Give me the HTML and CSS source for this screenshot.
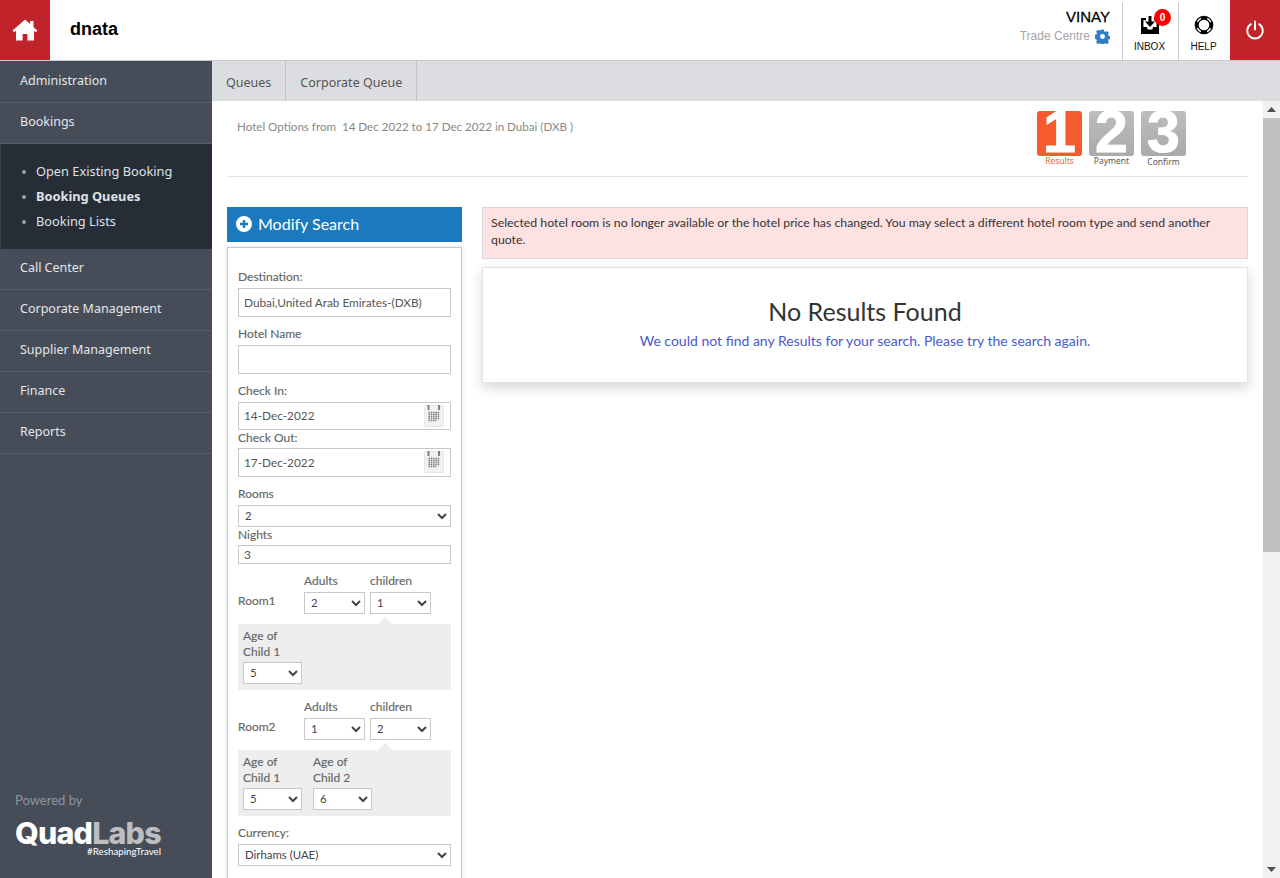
FILE: index.html
```html
<!DOCTYPE html>
<html lang="en">
<head>
<meta charset="utf-8">
<title>dnata</title>
<link rel="stylesheet" href="styles.css">
</head>
<body>
<header class="topbar">
  <a class="home"><svg width="26" height="22" viewBox="0 0 26 22"><path fill="#fff" d="M13 0.5 0.6 11.600l1.600 1.700L4 11.700V21.500h6.600v-6.600h4.800v6.600H22V11.700l1.800 1.600 1.600-1.700L21.500 8.200V2h-3.400v3.100z"/></svg></a>
  <div class="brand">dnata</div>
  <div class="user">
    <div class="user-name">VINAY</div>
    <div class="user-org">Trade Centre
      <svg width="15" height="15" viewBox="0 0 16 16"><path fill="#2f7fc8" fill-rule="evenodd" d="M6.600.5h2.800l.4 2 1.200.6 1.900-.9 2 2-1 1.800.6 1.300 2 .5v2.800l-2 .5-.6 1.200 1 1.900-2 2-1.900-1-1.200.5-.4 2H6.600l-.5-2-1.200-.5-1.800 1-2-2 1-1.900-.6-1.200-2-.5V6.300l2-.5.6-1.300-1-1.800 2-2 1.800.9 1.200-.6zM8 5.400a2.600 2.600 0 1 0 0 5.200 2.600 2.600 0 0 0 0-5.200z"/></svg>
    </div>
  </div>
  <div class="tool">
    <span class="tool-box"><svg width="18" height="18" viewBox="0 0 18 18"><path fill="#000" d="M0 2h5v2.200H2.400v6.800h3.400l1 2.400h4.400l1-2.400h3.400V4.200H13V2h5v16H0z"/><path fill="#000" d="M7.500 0h3v5.500H14l-5 5.500-5-5.500h3.500z"/></svg></span>
    <span class="badge">0</span>
    <span class="tool-label">INBOX</span>
  </div>
  <div class="tool tool-help">
    <span class="tool-box"><svg width="20" height="20" viewBox="0 0 20 20" fill="none"><circle cx="10" cy="10" r="7.300" stroke="#000" stroke-width="4"/><circle cx="10" cy="10" r="7.300" stroke="#fff" stroke-width="1.500" stroke-dasharray="5 6.470" stroke-dashoffset="-3.230"/></svg></span>
    <span class="tool-label">HELP</span>
  </div>
  <a class="power"><svg width="20" height="20" viewBox="0 0 20 20" fill="none" stroke="#fff" stroke-width="2" stroke-linecap="round"><path d="M10 1.500v8"/><path d="M5.800 4.200a7.800 7.800 0 1 0 8.400 0"/></svg></a>
</header>

<div class="shell">
  <nav class="sidebar">
    <a class="nav-item nav-first">Administration</a>
    <a class="nav-item">Bookings</a>
    <ul class="subnav">
      <li>Open Existing Booking</li>
      <li class="current">Booking Queues</li>
      <li>Booking Lists</li>
    </ul>
    <a class="nav-item">Call Center</a>
    <a class="nav-item">Corporate Management</a>
    <a class="nav-item">Supplier Management</a>
    <a class="nav-item">Finance</a>
    <a class="nav-item">Reports</a>
    <div class="powered">
      <div class="powered-by">Powered by</div>
      <div class="logo"><span class="logo-quad">Quad</span><span class="logo-labs">Labs</span></div>
      <div class="logo-tag">#ReshapingTravel</div>
    </div>
  </nav>

  <div class="workspace">
    <div class="tabs">
      <a class="tab">Queues</a>
      <a class="tab">Corporate Queue</a>
    </div>
    <div class="scroller">
      <main class="content">
        <div class="steps-row">
          <div class="trip">Hotel Options from&nbsp; 14 Dec 2022 to 17 Dec 2022 in Dubai (DXB )</div>
          <div class="steps">
            <div class="step active"><span class="step-num">1</span><span class="step-label">Results</span></div>
            <div class="step"><span class="step-num">2</span><span class="step-label">Payment</span></div>
            <div class="step step-low"><span class="step-num">3</span><span class="step-label">Confirm</span></div>
          </div>
        </div>
        <div class="columns">
          <aside class="search">
            <div class="search-head">
              <svg width="16" height="16" viewBox="0 0 16 16"><circle cx="8" cy="8" r="8" fill="#fff"/><path d="M8 4v8M4 8h8" stroke="#1b79bd" stroke-width="2.400"/></svg>
              Modify Search
            </div>
            <form class="search-panel">
              <label class="lbl lbl-first">Destination:</label>
              <input class="field tall" value="Dubai,United Arab Emirates-(DXB)">
              <label class="lbl lbl-gap">Hotel Name</label>
              <input class="field tall">
              <label class="lbl lbl-gap">Check In:</label>
              <div class="date"><input class="field date-input" value="14-Dec-2022"><span class="cal"><svg width="20" height="22" viewBox="0 0 20 22"><rect x=".5" y=".5" width="19" height="21" rx="1" fill="#f2f2f2" stroke="#e6e6e6"/><path d="M4.500 0v5M15 0v5" stroke="#808080" stroke-width="2"/><path d="M4.500 7.500h11.500M4.500 9.500h11.500M4.500 11.500h11.500M4.500 13.500h11.500M4.500 15.500h8" stroke="#7d7d7d" stroke-width="1.300" stroke-dasharray="1.500 .8"/></svg></span></div>
              <label class="lbl lbl-tight">Check Out:</label>
              <div class="date date-b"><input class="field date-input" value="17-Dec-2022"><span class="cal"><svg width="20" height="22" viewBox="0 0 20 22"><rect x=".5" y=".5" width="19" height="21" rx="1" fill="#f2f2f2" stroke="#e6e6e6"/><path d="M4.500 0v5M15 0v5" stroke="#808080" stroke-width="2"/><path d="M4.500 7.500h11.500M4.500 9.500h11.500M4.500 11.500h11.500M4.500 13.500h11.500M4.500 15.500h8" stroke="#7d7d7d" stroke-width="1.300" stroke-dasharray="1.500 .8"/></svg></span></div>
              <label class="lbl lbl-gap">Rooms</label>
              <select class="sel sel-full"><option>2</option></select>
              <label class="lbl lbl-tight">Nights</label>
              <input class="field short" value="3">

              <div class="room">
                <span class="room-name">Room1</span>
                <div class="pax"><span class="pax-lbl">Adults</span><select class="sel sel-pax"><option>2</option></select></div>
                <div class="pax"><span class="pax-lbl">children</span><select class="sel sel-pax"><option>1</option></select></div>
              </div>
              <div class="ages">
                <div class="age"><span class="age-lbl">Age of<br>Child 1</span><select class="sel sel-age"><option>5</option></select></div>
              </div>

              <div class="room">
                <span class="room-name">Room2</span>
                <div class="pax"><span class="pax-lbl">Adults</span><select class="sel sel-pax"><option>1</option></select></div>
                <div class="pax"><span class="pax-lbl">children</span><select class="sel sel-pax"><option>2</option></select></div>
              </div>
              <div class="ages">
                <div class="age"><span class="age-lbl">Age of<br>Child 1</span><select class="sel sel-age"><option>5</option></select></div>
                <div class="age"><span class="age-lbl">Age of<br>Child 2</span><select class="sel sel-age"><option>6</option></select></div>
              </div>

              <label class="lbl lbl-gap">Currency:</label>
              <select class="sel sel-full"><option>Dirhams (UAE)</option></select>
            </form>
          </aside>
          <section class="results">
            <div class="alert">Selected hotel room is no longer available or the hotel price has changed. You may select a different hotel room type and send another quote.</div>
            <div class="empty">
              <h2 class="empty-title">No Results Found</h2>
              <p class="empty-text">We could not find any Results for your search. Please try the search again.</p>
            </div>
          </section>
        </div>
      </main>
      <div class="scrollbar">
        <span class="sb-btn"><svg width="9" height="5" viewBox="0 0 9 5"><path d="M4.500 0 9 5H0z" fill="#505050"/></svg></span>
        <span class="sb-thumb"></span>
        <span class="sb-rest"></span>
        <span class="sb-btn"><svg width="9" height="5" viewBox="0 0 9 5"><path d="M4.500 5 9 0H0z" fill="#505050"/></svg></span>
      </div>
    </div>
  </div>
</div>
</body>
</html>
```
FILE: styles.css
```css
* { box-sizing: border-box; }
html, body { margin: 0; height: 100%; overflow: hidden; }
body { font-family: "Lato", "Liberation Sans", sans-serif; color: #333; background: #fff; display: flex; flex-direction: column; height: 878px; }

.topbar { height: 61px; flex: none; display: flex; border-bottom: 1px solid #c9cacc; background: #fff; }
.home { width: 50px; height: 60px; background: #c1232b; display: flex; align-items: center; justify-content: center; }
.brand { margin-left: 20px; font: bold 18px/58px "Liberation Sans", sans-serif; color: #000; }
.user { margin-left: auto; padding: 8px 12px 0 0; text-align: right; font-family: "Liberation Sans", sans-serif; }
.user-name { font-size: 15px; line-height: 17px; color: #000; -webkit-text-stroke: .3px #000; }
.user-org { font-size: 12px; line-height: 18px; margin-top: 2px; color: #a5a5a5; display: flex; align-items: center; gap: 5px; }
.tool { position: relative; width: 56px; height: 58px; margin-top: 2px; padding-right: 2px; border-left: 1px solid #ccc; display: flex; flex-direction: column; align-items: center; font-family: "Liberation Sans", sans-serif; }
.tool-help { width: 52px; }
.tool-box { margin-top: 13px; height: 20px; display: flex; align-items: center; }
.tool-label { font-size: 10px; line-height: 12px; margin-top: 6px; color: #111; }
.badge { position: absolute; left: 31px; top: 7px; width: 17px; height: 17px; border-radius: 50%; background: #f00; color: #fff; font-size: 10px; line-height: 17px; text-align: center; font-weight: bold; }
.power { width: 50px; height: 60px; background: #c1232b; display: flex; align-items: center; justify-content: center; }

.shell { flex: 1; min-height: 0; display: flex; }
.sidebar { width: 212px; flex: none; background: #464d59; display: flex; flex-direction: column; font-family: "Noto Sans", sans-serif; }
.nav-item { height: 41px; padding-left: 20px; font-size: 12.500px; line-height: 37px; color: #e4e6ea; border-bottom: 1px solid #585e69; }
.nav-first { height: 42px; line-height: 39px; }
.subnav { margin: 0; height: 105px; padding: 15px 0 0 35px; background: #272d37; border-left: 1px solid #3a414c; color: #dfe1e5; font-size: 12.800px; line-height: 25px; list-style: none; }
.subnav li { position: relative; }
.subnav li::before { content: ""; position: absolute; left: -14px; top: 11px; width: 4px; height: 4px; border-radius: 50%; background: #99a0a8; }
.subnav .current { font-weight: bold; }
.powered { margin-top: auto; padding: 0 0 21px 15px; }
.powered-by { font-size: 13px; line-height: 16px; color: #8f959e; font-family: "Lato", sans-serif; }
.logo { margin-top: 8px; font: 800 30.400px/34px "Inter", sans-serif; letter-spacing: -.8px; white-space: nowrap; }
.logo-quad { color: #fff; }
.logo-labs { color: #bcbec2; }
.logo-tag { margin: -4px 0 0 72px; font: 9.800px/11px "Lato", sans-serif; color: #fff; }

.workspace { flex: 1; min-width: 0; display: flex; flex-direction: column; }
.tabs { height: 40px; flex: none; background: #dcdde1; display: flex; }
.tab { padding: 0 14px; font: 12.500px/43px "Noto Sans", sans-serif; color: #555; border-right: 1px solid #c4c5c9; }
.scroller { flex: 1; min-height: 0; display: flex; }
.content { flex: 1; min-width: 0; overflow: hidden; padding: 0 15px; }

.steps-row { height: 76px; margin-bottom: 30px; border-bottom: 1px solid #e4e4e4; display: flex; justify-content: space-between; }
.trip { padding: 19px 0 0 10px; font-size: 11.600px; line-height: 14px; color: #888; }
.steps { display: flex; gap: 7px; margin: 10px 62px 0 0; }
.step { width: 45px; display: flex; flex-direction: column; align-items: center; }
.step-num { width: 45px; height: 45px; border-radius: 3px; background: linear-gradient(#bdbdbd, #aaaaaa); color: #fff; font: bold 59px/43px "Liberation Sans", sans-serif; -webkit-text-stroke: 1px #fff; text-align: center; }
.step.active .step-num { background: #f65b2d; }
.step-label { font: 8.500px/10px "Noto Sans", sans-serif; color: #555; white-space: nowrap; }
.step.active .step-label { color: #f2622f; }
.step-low .step-label { margin-top: 1px; }

.columns { display: flex; gap: 20px; }
.search { width: 235px; flex: none; }
.search-head { height: 35px; background: #1b79bd; color: #fff; font-size: 16px; line-height: 34px; padding: 0 0 2px 9px; display: flex; align-items: center; gap: 6px; }
.search-panel { margin-top: 5px; padding: 0 10px 20px; border: 1px solid #c8c8c8; box-shadow: 0 0 5px rgba(0,0,0,.12); display: flex; flex-direction: column; background: #fff; }
.lbl { font-size: 12px; line-height: 14px; color: #666; -webkit-text-stroke: .15px #666; }
.lbl-first { margin: 22px 0 4px; }
.lbl-gap { margin: 10px 0 4px; }
.lbl-tight { margin: 1px 0 4px; height: 13px; line-height: 13px; }
.field { display: block; width: 100%; padding: 0 5px 1px; border: 1px solid #c8c8c8; font: 11.800px "Lato", sans-serif; color: #555; background: #fff; border-radius: 0; outline: 0; }
.tall { height: 29px; }
.short { height: 19px; }
.date { position: relative; height: 28px; }
.date-b { height: 29px; }
.date-input { height: 100%; }
.cal { position: absolute; right: 7px; top: 3px; display: flex; }
.sel { height: 22px; padding: 0 0 1px 2px; border: 1px solid #c8c8c8; border-radius: 0; background: #fff; color: #444; font: 11.400px "Lato", sans-serif; outline: 0; }
.sel-full { width: 100%; }
.sel-pax { width: 61px; }
.sel-age { width: 59px; }

.room { display: flex; align-items: flex-end; margin-top: 10px; position: relative; }
.room-name { width: 66px; font-size: 12px; line-height: 14px; color: #666; align-self: flex-end; padding-bottom: 6px; -webkit-text-stroke: .15px #666; }
.pax { width: 66px; display: flex; flex-direction: column; gap: 4px; }
.pax-lbl { font-size: 12px; line-height: 14px; color: #666; -webkit-text-stroke: .15px #666; }
.ages { position: relative; margin-top: 10px; height: 66px; background: #eeeeee; display: flex; gap: 11px; padding: 4px 5px 0; }
.ages::before { content: ""; position: absolute; left: 140px; top: -7px; border: 7px solid transparent; border-top: 0; border-bottom-color: #eee; }
.age { display: flex; flex-direction: column; gap: 2px; }
.age-lbl { font-size: 12px; line-height: 16px; color: #666; -webkit-text-stroke: .15px #666; }

.results { flex: 1; min-width: 0; }
.alert { height: 52px; padding: 6px 8px; background: #fee1e1; border: 1px solid #d9d5d6; color: #333; font-size: 12.300px; line-height: 17px; }
.empty { margin-top: 8px; height: 116px; border: 1px solid #e2e2e2; box-shadow: 0 5px 12px rgba(0,0,0,.16); text-align: center; background: #fff; padding-top: 28px; }
.empty-title { margin: 0; font-size: 25px; line-height: 30px; font-weight: 400; color: #333; }
.empty-text { margin: 5px 0 0; font-size: 14px; line-height: 20px; color: #4a5ac8; }

.scrollbar { width: 17px; flex: none; background: #f1f1f1; display: flex; flex-direction: column; }
.sb-btn { height: 17px; flex: none; display: flex; align-items: center; justify-content: center; }
.sb-thumb { height: 434px; flex: none; background: #c1c1c1; }
.sb-rest { flex: 1; }
```
